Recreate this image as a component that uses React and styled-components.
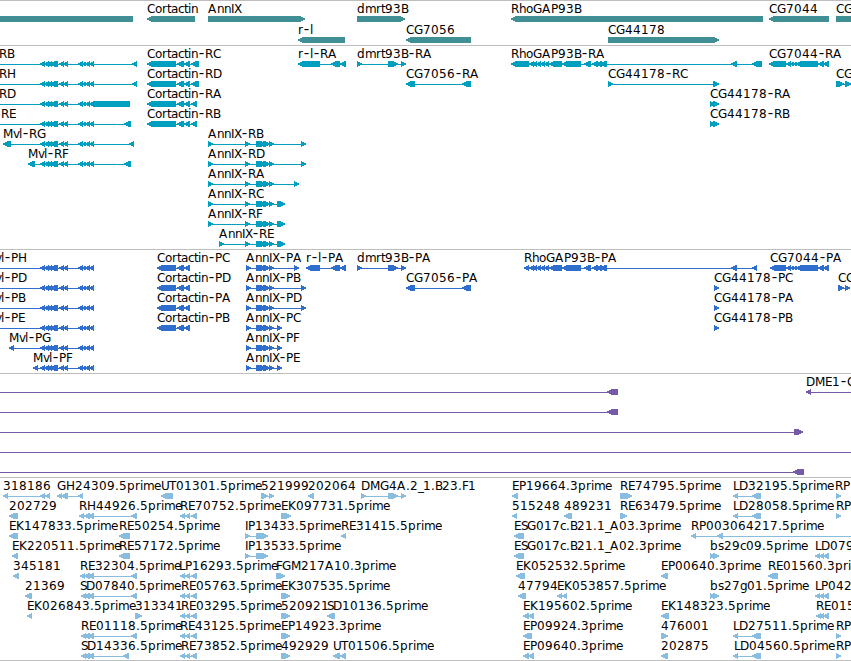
import React from "react";
import styled, { createGlobalStyle } from "styled-components";

const GlobalStyle = createGlobalStyle`
  body {
    margin: 0;
    background-color: #fff;
    overflow: hidden;
  }
`;

const Browser = styled.main`
  display: flex;
  flex-direction: column;
  width: 851px;
  height: 661px;
  overflow: hidden;
  background-color: #fff;
`;

const Track = styled.section`
  flex: none;
  display: flex;
  flex-direction: column;
  padding-bottom: ${(props) => props.$gap}px;
  border-top: 1px solid #bebebe;
  color: ${(props) => props.$color};
`;

const Lane = styled.svg`
  display: block;
  flex: none;
  width: 851px;
  height: ${(props) => props.$height}px;
  overflow: visible;
`;

const Label = styled.text`
  font-family: "DejaVu Sans", sans-serif;
  font-size: 12px;
  fill: #000;
  white-space: pre;
`;

// the wider dash of the gene names
const Dash = styled.tspan`
  font-family: "Liberation Mono", monospace;
  font-size: 15px;
`;

const Shape = styled.path`
  fill: currentColor;
  shape-rendering: crispEdges;
`;

const EndLine = styled.div`
  flex: none;
  height: 1px;
  background-color: #bebebe;
`;

// whole pixel advances of the label characters
const ADVANCE = {
  A: 9, B: 7, C: 8, D: 9, E: 7, F: 6, G: 9, H: 9, I: 3, K: 8, L: 6, M: 10,
  P: 7, R: 8, S: 6, T: 7, U: 8, X: 7,
  a: 7, b: 8, c: 6, d: 8, e: 7, g: 7, h: 7, i: 3, l: 3, m: 11, n: 7, o: 7,
  p: 8, r: 5, s: 6, t: 4, v: 6,
  ".": 4, "-": 7, _: 5,
};

const advance = (text) =>
  text.split("").reduce((sum, ch) => sum + (ADVANCE[ch] || 8), 0);

const glyphPositions = (text, x) =>
  text
    .split("")
    .map((ch, i) => x + advance(text.slice(0, i)))
    .join(" ");

const exonPath = ([a, b], dir) => {
  if (dir === "L") {
    return `M${a} 17h2v-1h2v-1H${b}V21H${a + 4}v-1h-2v-1h-2Z`;
  }
  return `M${b} 17h-2v-1h-2v-1H${a}V21H${b - 4}v-1h2v-1h2Z`;
};

function Name({ text, x }) {
  const parts = text.split(/(-)/);
  return (
    <Label y="12">
      {parts.map((part, i) => {
        const at = x + advance(parts.slice(0, i).join(""));
        return part === "-" ? (
          <Dash key={i} x={at - 1}>-</Dash>
        ) : (
          <tspan key={i} x={glyphPositions(part, at)}>{part}</tspan>
        );
      })}
    </Label>
  );
}

// feature: [label, label x, direction, exons, line end]
function Feature({ data }) {
  const [label, x, dir, exons, lineEnd] = data;
  const start = exons.length ? Math.min(x, exons[0][0]) : x;
  const end = lineEnd || exons[exons.length - 1][1];
  const line = exons.length > 1 || lineEnd || start < exons[0][0];
  return (
    <g>
      {line && <Shape d={`M${start + 1} 18H${end - 1}V19H${start + 1}Z`} />}
      {exons.map((exon) => (
        <Shape key={exon.join()} d={exonPath(exon, dir)} />
      ))}
      {label && <Name text={label} x={x} />}
    </g>
  );
}

const MVL = [[40, 45], [44, 49], [47, 52], [50, 58], [59, 64], [63, 68], [78, 83], [82, 86], [85, 90], [89, 94]];
const MVL_LONG = [...MVL.slice(0, 9), [89, 130]];
const CORT = [[147, 176], [177, 184], [184, 190]];
const CORT_P = [[157, 176], [177, 184], [184, 190]];
const ANN = [[256, 266], [263, 270], [269, 274]];
const ANN_R = [[245, 250], ...ANN];
const RHO = [[529, 534], [532, 537], [536, 541], [540, 545], [544, 549], [549, 562], [562, 581], [584, 591], [592, 598], [596, 602], [600, 607], [731, 737]];
const CG7044 = [[786, 791], [790, 794], [793, 797], [796, 818], [818, 824], [823, 829]];
const DMRT = [[357, 362], [388, 396], [392, 398], [401, 406]];
const CG7056 = [[406, 415], [462, 471]];
const TAIL = [[84, 90], [88, 94], [131, 137]];
const RE_TRIO = [[180, 185], [185, 190], [191, 197]];
const LD_PAIR = [[733, 738], [752, 761]];
const BS_PAIR = [[710, 715], [713, 719]];
const LD_TRIO = [[815, 820], [819, 824], [823, 829]];

const genes = [
  [
    ["", -10, "L", [[-10, 133]]],
    ["Cortactin", 147, "L", [[147, 195]]],
    ["AnnIX", 208, "R", [[208, 305]]],
    ["dmrt93B", 357, "R", [[357, 405]]],
    ["RhoGAP93B", 511, "L", [[511, 763]]],
    ["CG7044", 769, "L", [[769, 829]]],
    ["CG", 836, "R", [[836, 870]]],
  ],
  [
    ["r-l", 298, "L", [[298, 345]]],
    ["CG7056", 406, "L", [[406, 471]]],
    ["CG44178", 608, "R", [[608, 719]]],
  ],
];

const transcripts = [
  [
    ["Mvl-RB", -27, "L", [...MVL, [132, 137]]],
    ["Cortactin-RC", 147, "L", [...CORT, [191, 199]]],
    ["r-l-RA", 298, "L", [[298, 320], [331, 340], [340, 346]]],
    ["dmrt93B-RA", 357, "R", DMRT],
    ["RhoGAP93B-RA", 511, "L", [[511, 529], ...RHO, [752, 762]]],
    ["CG7044-RA", 769, "L", [[769, 786], ...CG7044]],
  ],
  [
    ["Mvl-RH", -27, "L", [...MVL, [132, 137]]],
    ["Cortactin-RD", 147, "L", [...CORT, [191, 199]]],
    ["CG7056-RA", 406, "L", CG7056],
    ["CG44178-RC", 608, "R", [[608, 613], [713, 719]]],
    ["CG", 836, "R", [[836, 844], [845, 851]]],
  ],
  [
    ["Mvl-RD", -27, "L", MVL_LONG],
    ["Cortactin-RA", 147, "L", [...CORT, [191, 197]]],
    ["CG44178-RA", 710, "R", BS_PAIR],
  ],
  [
    ["Mvl-RE", -25, "L", [...MVL, [124, 131]]],
    ["Cortactin-RB", 147, "L", [...CORT, [191, 197]]],
    ["CG44178-RB", 710, "R", BS_PAIR],
  ],
  [
    ["Mvl-RG", 3, "L", [[3, 11], ...MVL, [129, 134]]],
    ["AnnIX-RB", 208, "R", [[208, 213], ...ANN_R, [301, 306]]],
  ],
  [
    ["Mvl-RF", 28, "L", [[28, 35], ...MVL, [124, 131]]],
    ["AnnIX-RD", 208, "R", [[208, 213], ...ANN_R, [301, 306]]],
  ],
  [["AnnIX-RA", 208, "R", [[208, 213], ...ANN_R, [294, 299]]]],
  [["AnnIX-RC", 208, "R", [[208, 213], ...ANN_R, [277, 285]]]],
  [["AnnIX-RF", 208, "R", [[208, 213], ...ANN_R, [277, 285]]]],
  [["AnnIX-RE", 219, "R", [[219, 224], ...ANN_R, [277, 285]]]],
];

const proteins = [
  [
    ["Mvl-PH", -15, "L", MVL],
    ["Cortactin-PC", 157, "L", CORT_P],
    ["AnnIX-PA", 246, "R", [[246, 251], ...ANN, [294, 299]]],
    ["r-l-PA", 306, "L", [[306, 320], [331, 340], [340, 346]]],
    ["dmrt93B-PA", 357, "R", DMRT],
    ["RhoGAP93B-PA", 524, "L", [[524, 529], ...RHO, [752, 757]]],
    ["CG7044-PA", 770, "L", [[770, 786], ...CG7044]],
  ],
  [
    ["Mvl-PD", -15, "L", MVL],
    ["Cortactin-PD", 157, "L", CORT_P],
    ["AnnIX-PB", 246, "R", [[246, 251], ...ANN, [301, 306]]],
    ["CG7056-PA", 406, "L", CG7056],
    ["CG44178-PC", 714, "R", [[714, 719]]],
    ["CG", 838, "R", [[838, 844], [845, 850]]],
  ],
  [
    ["Mvl-PB", -15, "L", MVL],
    ["Cortactin-PA", 157, "L", CORT_P],
    ["AnnIX-PD", 246, "R", [[246, 251], ...ANN, [301, 306]]],
    ["CG44178-PA", 714, "R", [[714, 719]]],
  ],
  [
    ["Mvl-PE", -15, "L", MVL],
    ["Cortactin-PB", 157, "L", CORT_P],
    ["AnnIX-PC", 246, "R", [[246, 251], ...ANN, [277, 282]]],
    ["CG44178-PB", 714, "R", [[714, 719]]],
  ],
  [
    ["Mvl-PG", 9, "L", [[9, 14], ...MVL]],
    ["AnnIX-PF", 246, "R", [[246, 251], ...ANN, [277, 282]]],
  ],
  [
    ["Mvl-PF", 33, "L", [[33, 38], ...MVL]],
    ["AnnIX-PE", 246, "R", [[246, 251], ...ANN, [277, 282]]],
  ],
];

const clones = [
  [
    ["", -5, "L", [[607, 618]]],
    ["DME1-C", 806, "L", [[806, 811]], 860],
  ],
  [["", -5, "L", [[607, 618]]]],
  [["", -5, "R", [[794, 803]]]],
  [["", -5, "R", [], 860]],
  [["", -5, "L", [[793, 804]]]],
];

const ests = [
  [
    ["318186", 3, "L", [[3, 8], [40, 45], [45, 50]]],
    ["GH24309.5prime", 57, "L", [[57, 62], [61, 68], [78, 83]]],
    ["UT01301.5prime", 161, "L", [[161, 173]]],
    ["521999", 261, "R", [[261, 268], [269, 274]]],
    ["202064", 308, "L", [[308, 314]]],
    ["DMG4A.2_1.B23.F1", 361, "R", [[361, 366], [388, 398], [401, 406]]],
    ["EP19664.3prime", 512, "L", [[512, 518]]],
    ["RE74795.5prime", 620, "R", [[620, 632]]],
    ["LD32195.5prime", 733, "L", LD_PAIR],
    ["RP", 835, "R", [[836, 841]]],
  ],
  [
    ["202729", 9, "L", [[9, 18]]],
    ["RH44926.5prime", 79, "L", [[79, 84], ...TAIL]],
    ["RE70752.5prime", 180, "L", RE_TRIO],
    ["EK097731.5prime", 281, "R", [[281, 291]]],
    ["515248", 512, "L", [[512, 517]]],
    ["489231", 564, "L", [[564, 572]]],
    ["RE63479.5prime", 620, "R", [[620, 627]]],
    ["LD28058.5prime", 733, "L", LD_PAIR],
    ["RP", 836, "R", [[836, 841]]],
  ],
  [
    ["EK147833.5prime", 9, "L", [[9, 18]]],
    ["RE50254.5prime", 119, "L", [[119, 130]]],
    ["IP13433.5prime", 245, "R", [[245, 250], [256, 268]]],
    ["RE31415.5prime", 341, "L", [[341, 346]]],
    ["ESG017c.B21.1_A03.3prime", 514, "L", [[514, 524]]],
    ["RP003064217.5prime", 691, "L", [[691, 696], [717, 723]], 860],
  ],
  [
    ["EK220511.5prime", 12, "L", [[12, 18]]],
    ["RE57172.5prime", 119, "L", [[119, 130]]],
    ["IP13533.5prime", 245, "R", [[245, 250], [256, 268]]],
    ["ESG017c.B21.1_A02.3prime", 514, "L", [[514, 524]]],
    ["bs29c09.5prime", 710, "R", BS_PAIR],
    ["LD079", 815, "L", LD_TRIO],
  ],
  [
    ["345181", 13, "L", [[13, 19]]],
    ["RE32304.5prime", 80, "L", [[80, 85], ...TAIL]],
    ["LP16293.5prime", 179, "L", RE_TRIO],
    ["FGM217A10.3prime", 276, "R", [[276, 285]]],
    ["EK052532.5prime", 516, "L", [[516, 525]]],
    ["EP00640.3prime", 661, "L", [[661, 668]]],
    ["RE01560.3prime", 768, "L", [[768, 778]]],
  ],
  [
    ["21369", 25, "L", [[25, 32]]],
    ["SD07840.5prime", 80, "L", [[81, 86], ...TAIL]],
    ["RE05763.5prime", 181, "L", RE_TRIO],
    ["EK307535.5prime", 281, "R", [[281, 290]]],
    ["47794", 518, "L", [[518, 526]]],
    ["EK053857.5prime", 557, "L", [[557, 562], [562, 567]]],
    ["bs27g01.5prime", 710, "R", BS_PAIR],
    ["LP042", 815, "L", LD_TRIO],
  ],
  [
    ["EK026843.5prime", 27, "L", [[27, 32]]],
    ["313341", 135, "R", [[135, 142]]],
    ["RE03295.5prime", 181, "L", RE_TRIO],
    ["520921", 281, "R", [[281, 290]]],
    ["SD10136.5prime", 327, "L", [[327, 335]]],
    ["EK195602.5prime", 523, "L", [[523, 529], [528, 534]]],
    ["EK148323.5prime", 661, "L", [[661, 669]]],
    ["RE015", 816, "L", [[816, 821], ...LD_TRIO.slice(1)]],
  ],
  [
    ["RE01118.5prime", 81, "L", [[81, 86], ...TAIL]],
    ["RE43125.5prime", 180, "L", RE_TRIO],
    ["EP14923.3prime", 281, "R", [[281, 290]]],
    ["EP09924.3prime", 523, "L", [[523, 532]]],
    ["476001", 661, "R", [[661, 668]]],
    ["LD27511.5prime", 733, "L", LD_PAIR],
    ["RP", 836, "R", [[836, 841]]],
  ],
  [
    ["SD14336.5prime", 81, "L", [[81, 86], [84, 90], [88, 94], [123, 129]]],
    ["RE73852.5prime", 181, "L", RE_TRIO],
    ["492929", 281, "R", [[281, 290]]],
    ["UT01506.5prime", 333, "L", [[333, 340], [340, 346]]],
    ["EP09640.3prime", 523, "L", [[523, 529], [528, 534]]],
    ["202875", 661, "L", [[661, 668]]],
    ["LD04560.5prime", 734, "L", LD_PAIR],
    ["RP", 836, "R", [[836, 841]]],
  ],
];

const tracks = [
  { name: "genes", color: "#408f94", lanes: genes, height: 21, gap: 2 },
  { name: "transcripts", color: "#009fc0", lanes: transcripts, height: 20, gap: 3 },
  { name: "proteins", color: "#306ecd", lanes: proteins, height: 20, gap: 3 },
  { name: "clones", color: "#755aa8", lanes: clones, height: 20, gap: 3 },
  { name: "ests", color: "#89bddf", lanes: ests, height: 20, gap: 2 },
];

export default function App() {
  return (
    <>
      <GlobalStyle />
      <Browser>
        {tracks.map((track) => (
          <Track key={track.name} $color={track.color} $gap={track.gap}>
            {track.lanes.map((lane, i) => (
              <Lane key={i} $height={track.height}>
                {lane.map((data, j) => (
                  <Feature key={j} data={data} />
                ))}
              </Lane>
            ))}
          </Track>
        ))}
        <EndLine />
      </Browser>
    </>
  );
}
